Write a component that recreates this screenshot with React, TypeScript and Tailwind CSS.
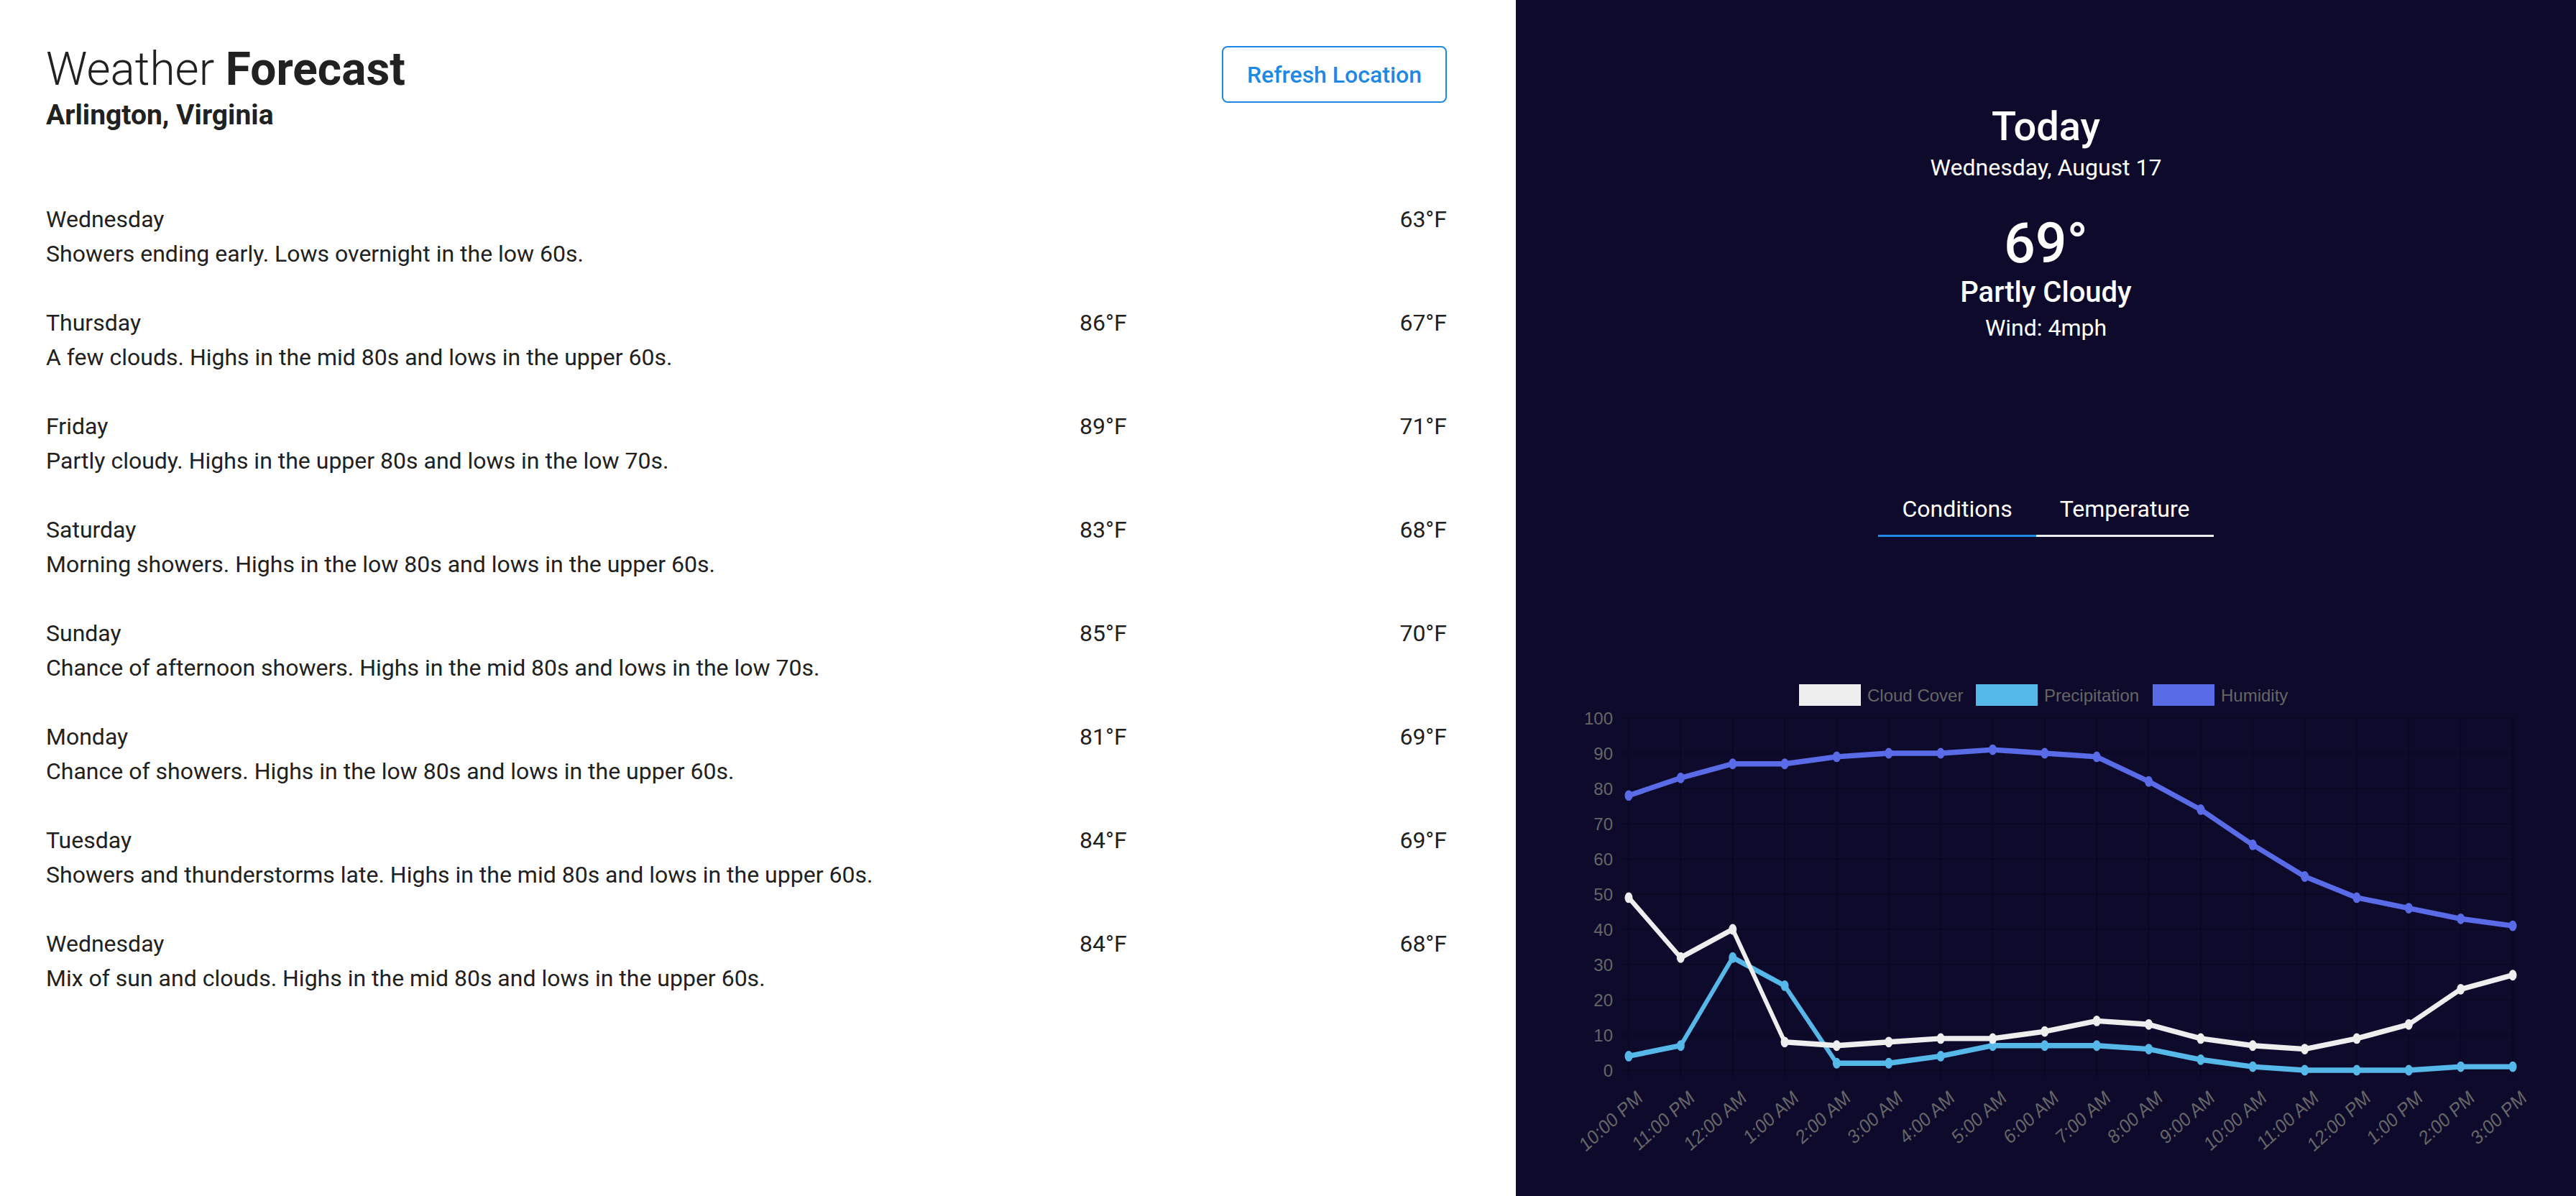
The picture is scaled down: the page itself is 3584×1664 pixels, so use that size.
import React from "react";

type Day = { name: string; text: string; high?: string; low: string };

const days: Day[] = [
  { name: "Wednesday", text: "Showers ending early. Lows overnight in the low 60s.", low: "63°F" },
  { name: "Thursday", text: "A few clouds. Highs in the mid 80s and lows in the upper 60s.", high: "86°F", low: "67°F" },
  { name: "Friday", text: "Partly cloudy. Highs in the upper 80s and lows in the low 70s.", high: "89°F", low: "71°F" },
  { name: "Saturday", text: "Morning showers. Highs in the low 80s and lows in the upper 60s.", high: "83°F", low: "68°F" },
  { name: "Sunday", text: "Chance of afternoon showers. Highs in the mid 80s and lows in the low 70s.", high: "85°F", low: "70°F" },
  { name: "Monday", text: "Chance of showers. Highs in the low 80s and lows in the upper 60s.", high: "81°F", low: "69°F" },
  { name: "Tuesday", text: "Showers and thunderstorms late. Highs in the mid 80s and lows in the upper 60s.", high: "84°F", low: "69°F" },
  { name: "Wednesday", text: "Mix of sun and clouds. Highs in the mid 80s and lows in the upper 60s.", high: "84°F", low: "68°F" },
];

const hours = [
  "10:00 PM", "11:00 PM", "12:00 AM", "1:00 AM", "2:00 AM", "3:00 AM", "4:00 AM", "5:00 AM", "6:00 AM",
  "7:00 AM", "8:00 AM", "9:00 AM", "10:00 AM", "11:00 AM", "12:00 PM", "1:00 PM", "2:00 PM", "3:00 PM",
];

const series = [
  { label: "Humidity", color: "#5a6be8", data: [78, 83, 87, 87, 89, 90, 90, 91, 90, 89, 82, 74, 64, 55, 49, 46, 43, 41] },
  { label: "Precipitation", color: "#55b8e8", data: [4, 7, 32, 24, 2, 2, 4, 7, 7, 7, 6, 3, 1, 0, 0, 0, 1, 1] },
  { label: "Cloud Cover", color: "#eeeeee", data: [49, 32, 40, 8, 7, 8, 9, 9, 11, 14, 13, 9, 7, 6, 9, 13, 23, 27] },
];

const legend = [
  { label: "Cloud Cover", color: "#eeeeee", x: 394 },
  { label: "Precipitation", color: "#55b8e8", x: 640 },
  { label: "Humidity", color: "#5a6be8", x: 886 },
];

// the chart canvas in the original is stretched a little more vertically than horizontally
const SY = 1.35;
const px = (i: number) => 157 + (i * 1230) / 17;
const py = (v: number) => 688 - 4.9 * v;
const chartFont = "'Liberation Sans', Arial, sans-serif";

function ConditionsChart() {
  return (
    <svg width={1475} height={864} className="block">
      {/* legend */}
      {legend.map((l) => (
        <g key={l.label}>
          <rect x={l.x} y={151} width={86} height={30} fill={l.color} />
          <text x={l.x + 95} y={166} dy="0.36em" fontSize={24} fill="#666" fontFamily={chartFont}>
            {l.label}
          </text>
        </g>
      ))}

      {/* grid + ticks */}
      {Array.from({ length: 11 }).map((_, k) => (
        <g key={k}>
          <line x1={147} x2={1387} y1={py(k * 10)} y2={py(k * 10)} stroke="#000" strokeOpacity={0.18} strokeWidth={2} />
          <text x={135} y={py(k * 10)} dy="0.36em" textAnchor="end" fontSize={24} fill="#666" fontFamily={chartFont}>
            {k * 10}
          </text>
        </g>
      ))}
      {hours.map((h, i) => (
        <g key={h}>
          <line x1={px(i)} x2={px(i)} y1={py(100)} y2={698} stroke="#000" strokeOpacity={0.18} strokeWidth={2} />
          <g transform={`translate(${px(i) + 10} 714) scale(1 1.15) rotate(-38)`}>
            <text x={0} y={0} dy="0.72em" textAnchor="end" fontSize={24} fill="#666" fontFamily={chartFont}>
              {h}
            </text>
          </g>
        </g>
      ))}

      {/* data */}
      <g transform={`scale(1 ${SY})`}>
        {series.map((s) => (
          <g key={s.label}>
            <polyline
              points={s.data.map((v, i) => `${px(i)},${py(v) / SY}`).join(" ")}
              fill="none"
              stroke={s.color}
              strokeWidth={5.5}
              strokeLinejoin="round"
            />
            {s.data.map((v, i) => (
              <circle key={i} cx={px(i)} cy={py(v) / SY} r={5.5} fill={s.color} />
            ))}
          </g>
        ))}
      </g>
    </svg>
  );
}

export default function App() {
  const [tab, setTab] = React.useState("conditions");

  return (
    <div className="flex min-h-screen w-full font-[Roboto,sans-serif]">
      {/* Forecast list */}
      <div className="flex-1 pl-16 pr-24 pt-[65px] text-[#212121]">
        <div className="flex items-start justify-between">
          <div>
            <h1 className="text-[64px] leading-none font-light">
              Weather <span className="font-bold">Forecast</span>
            </h1>
            <h2 className="mt-[12px] text-[39px] leading-none font-bold">Arlington, Virginia</h2>
          </div>
          <button className="-mt-px flex h-[79px] items-center rounded-lg border-2 border-[#1e88e5] px-[33px] text-[32px] leading-none font-medium text-[#1e88e5]">
            Refresh Location
          </button>
        </div>

        <div className="mt-[101px] flex flex-col gap-[48px]">
          {days.map((d, i) => (
            <div key={i} className="flex text-[32px] leading-[48px]">
              <div className="flex-1">
                <div>{d.name}</div>
                <div>{d.text}</div>
              </div>
              <div className="flex w-[511px] justify-between">
                <span>{d.high ?? ""}</span>
                <span>{d.low}</span>
              </div>
            </div>
          ))}
        </div>
      </div>

      {/* Today panel */}
      <div className="flex w-[1475px] flex-col items-center bg-[#0e0a2c] pt-[148px] text-white">
        <div className="text-[56px] leading-none font-medium">Today</div>
        <div className="mt-[13px] text-[32px] leading-none">Wednesday, August 17</div>
        <div className="mt-[52px] text-[77px] leading-none font-medium">69°</div>
        <div className="mt-[9px] text-[40px] leading-none font-medium">Partly Cloudy</div>
        <div className="mt-[13px] text-[32px] leading-none">Wind: 4mph</div>

        <div className="mt-[220px] flex">
          <button
            onClick={() => setTab("conditions")}
            className={`border-b-[3px] px-[33px] pb-[20px] text-[32px] leading-none ${tab === "conditions" ? "border-[#1e88e5]" : "border-[#eeeeee]"}`}
          >
            Conditions
          </button>
          <button
            onClick={() => setTab("temperature")}
            className={`border-b-[3px] px-[33px] pb-[20px] text-[32px] leading-none ${tab === "temperature" ? "border-[#1e88e5]" : "border-[#eeeeee]"}`}
          >
            Temperature
          </button>
        </div>

        <div className="mt-[54px]">
          <ConditionsChart />
        </div>
      </div>
    </div>
  );
}
